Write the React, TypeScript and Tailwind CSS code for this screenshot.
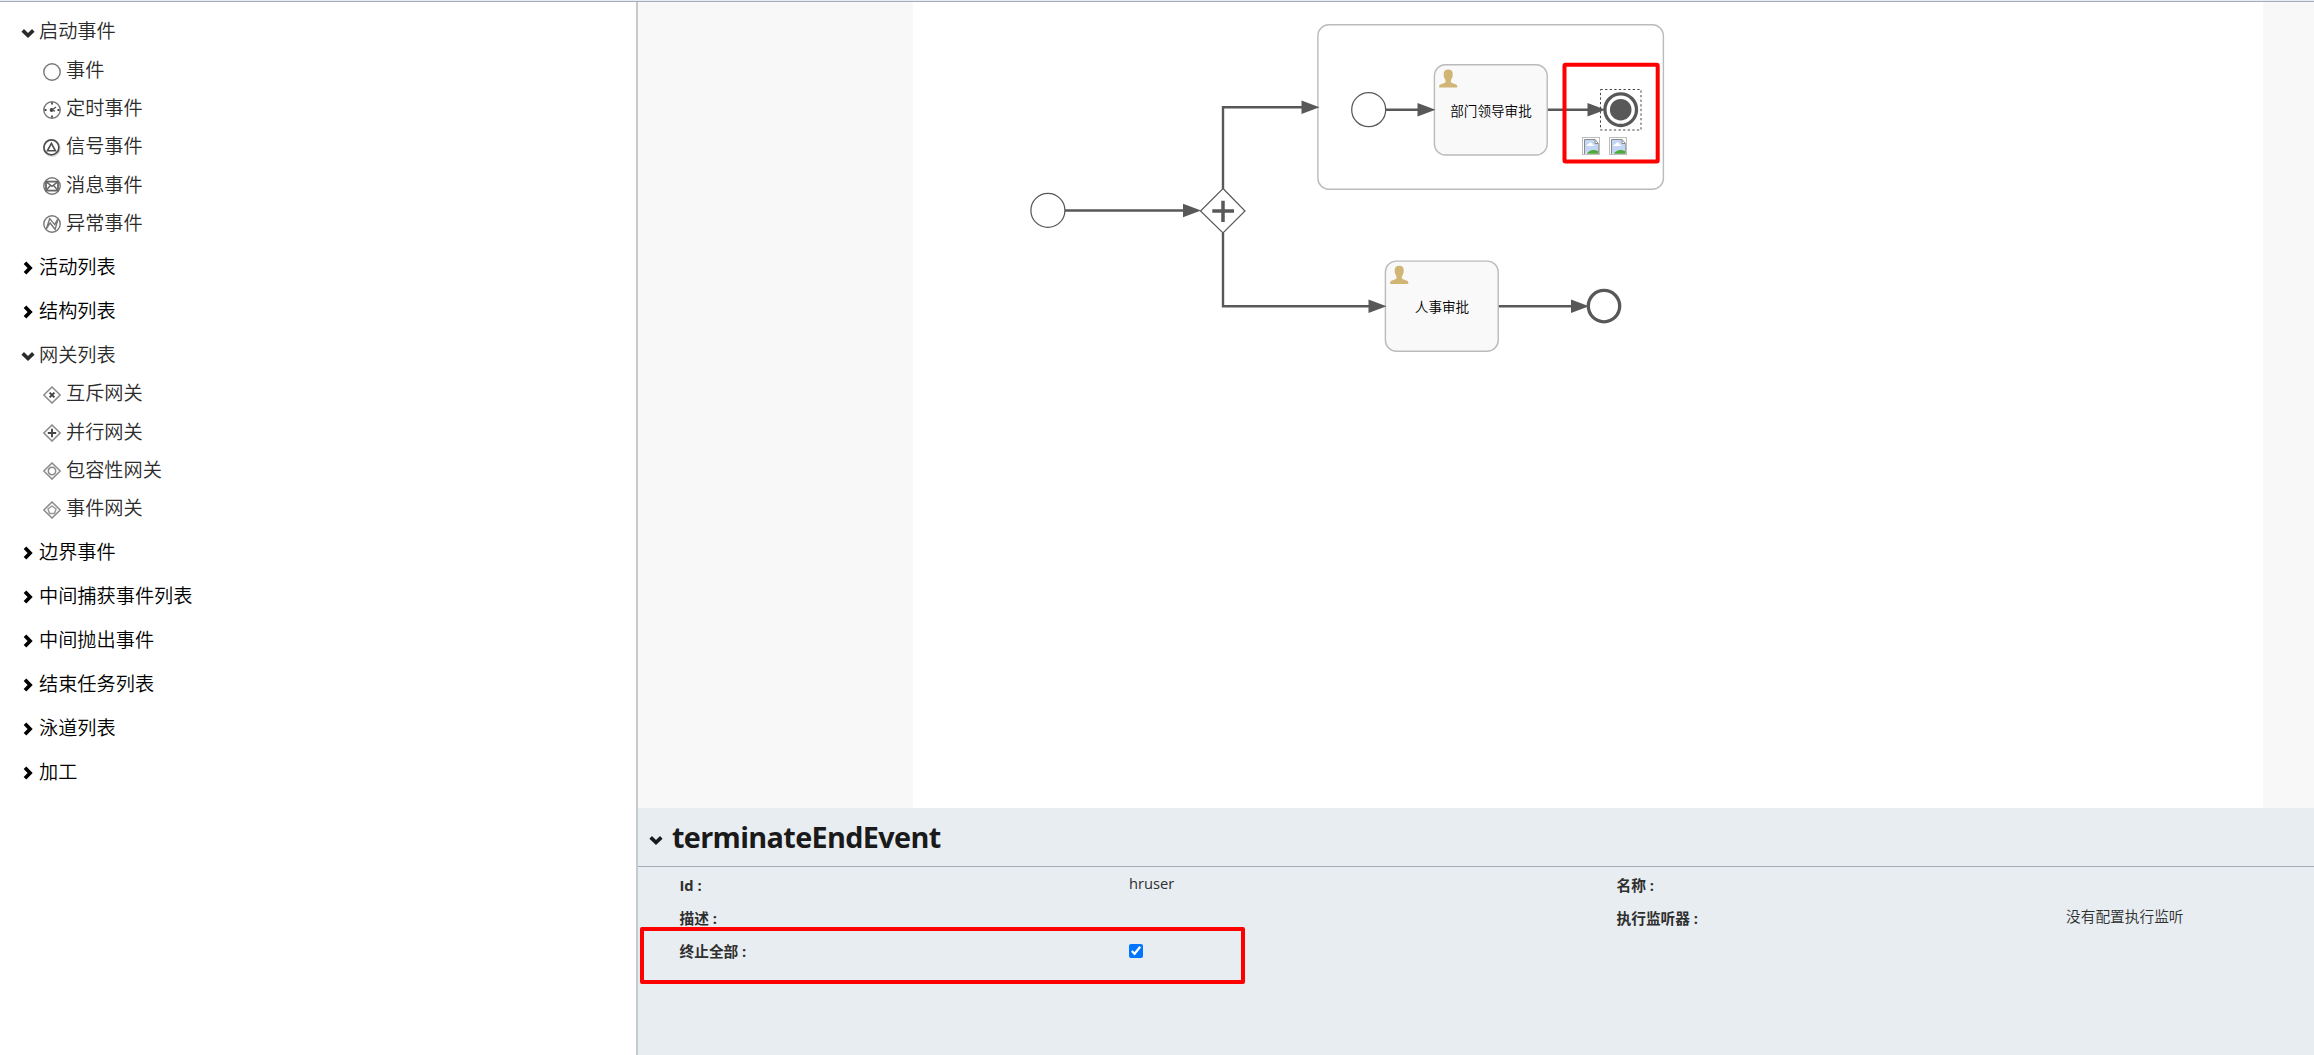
import React from "react";

const FONT = "font-['Open_Sans','Noto_Sans_CJK_SC',sans-serif]";

const GRAY = "#585858";

type Item = { label: string; icon: React.ReactNode };
type Group = { label: string; items?: Item[] };

const ring = <circle cx="9" cy="9" r="8.2" fill="none" stroke="#777" strokeWidth="1.4" />;
const diamond = <path d="M9 1 17.2 9 9 17 .8 9Z" fill="none" stroke="#8c8c8c" strokeWidth="1.6" />;

const groups: Group[] = [
  {
    label: "启动事件",
    items: [
      { label: "事件", icon: ring },
      {
        label: "定时事件",
        icon: (
          <g>
            {ring}
            <path d="M9 1.5v2M9 14.5v2M1.5 9h2M14.5 9h2" stroke="#444" strokeWidth="1.8" />
            <circle cx="8.6" cy="9" r="1.9" fill="#444" />
            <path d="M9 9l4-3M9 9l3 1.2" stroke="#555" strokeWidth="1.3" />
          </g>
        ),
      },
      {
        label: "信号事件",
        icon: (
          <g fill="none" stroke="#4d4d4d">
            <circle cx="9" cy="9.2" r="8.1" stroke="#ddd" strokeWidth="1.4" />
            <circle cx="8.4" cy="8.4" r="7.5" strokeWidth="1.7" />
            <path d="M8.4 4.4 12.4 11.8H4.4Z" strokeWidth="1.6" />
          </g>
        ),
      },
      {
        label: "消息事件",
        icon: (
          <g fill="none" stroke="#666">
            {ring}
            <rect x="3" y="4.6" width="12" height="9" strokeWidth="1.8" />
            <path d="M3 4.6 9 9.4l6-4.8M3 13.6l4.4-5M15 13.6l-4.4-5" strokeWidth="1.5" />
          </g>
        ),
      },
      {
        label: "异常事件",
        icon: (
          <g fill="none" stroke="#777">
            {ring}
            <path d="M3.2 14.2 6.7 3.6l5 6 3.4-6-3 10.8-5-6.4Z" strokeWidth="1.4" />
          </g>
        ),
      },
    ],
  },
  { label: "活动列表" },
  { label: "结构列表" },
  {
    label: "网关列表",
    items: [
      {
        label: "互斥网关",
        icon: (
          <g>
            {diamond}
            <path d="M6.6 6.6l4.8 4.8M11.4 6.6l-4.8 4.8" stroke="#444" strokeWidth="2" />
          </g>
        ),
      },
      {
        label: "并行网关",
        icon: (
          <g>
            {diamond}
            <path d="M9 4.8v8.4M4.8 9h8.4" stroke="#444" strokeWidth="1.9" />
          </g>
        ),
      },
      {
        label: "包容性网关",
        icon: (
          <g>
            {diamond}
            <circle cx="9" cy="9" r="3.7" fill="none" stroke="#8a8a8a" strokeWidth="1.5" />
          </g>
        ),
      },
      {
        label: "事件网关",
        icon: (
          <g>
            {diamond}
            <path d="M9 5 13 8l-1.5 4.6h-5L5 8Z" fill="none" stroke="#9a9a9a" strokeWidth="1.5" />
          </g>
        ),
      },
    ],
  },
  { label: "边界事件" },
  { label: "中间捕获事件列表" },
  { label: "中间抛出事件" },
  { label: "结束任务列表" },
  { label: "泳道列表" },
  { label: "加工" },
];

function Chevron({ open, className }: { open: boolean; className: string }) {
  return (
    <svg viewBox="0 0 14 14" className={className} fill="none" stroke="currentColor" strokeWidth="3.7">
      {open ? <path d="M1.7 4.4 7 9.5l5.3-5.1" /> : <path d="M4 1.7 9.1 7 4 12.3" />}
    </svg>
  );
}

function Palette() {
  return (
    <nav className="w-[636px] shrink-0 pt-[7px] text-[19.2px] leading-none font-[350]">
      {groups.map((g) => (
        <section key={g.label} className={g.items ? "pb-[3px] text-[#2b2b2b]" : "text-black"}>
          <div className="flex h-11 items-center pl-[21px]">
            <Chevron open={!!g.items} className="mt-[3px] mr-1 size-[14px]" />
            <span>{g.label}</span>
          </div>
          {g.items && (
            <ul className="-mt-[2.5px]">
              {g.items.map((it) => (
                <li key={it.label} className="flex h-[38.2px] items-center pl-[43px]">
                  <svg viewBox="0 0 18 18" className="mt-[4px] mr-[5px] size-[18px]">
                    {it.icon}
                  </svg>
                  <span>{it.label}</span>
                </li>
              ))}
            </ul>
          )}
        </section>
      ))}
    </nav>
  );
}

function Arrow({ x, y }: { x: number; y: number }) {
  return <path d={`M${x} ${y}l-18-6.7v13.4Z`} fill={GRAY} />;
}

function Task({ x, y, label }: { x: number; y: number; label: string }) {
  return (
    <g transform={`translate(${x} ${y})`}>
      <rect width="112.8" height="90.2" rx="11" fill="#f9f9f9" stroke="#bbb" strokeWidth="1.4" />
      <path
        d="M9.3 9.5C9 6.3 10.8 4.7 13.8 4.7s4.8 1.6 4.5 4.8c.2 2-.6 4.3-1.8 5.7v2.2c1.6 1.5 6.1 1.9 6.3 3.6v1.8h-18V21c.2-1.7 4.7-2.1 6.3-3.6v-2.2c-1.2-1.4-2-3.7-1.8-5.7Z"
        fill="#d1b575"
      />
      <text x="56.6" y="51.2" textAnchor="middle" fontSize="13.6" className="font-[350]" fill="#000">
        {label}
      </text>
    </g>
  );
}

function PictureIcon({ x, y }: { x: number; y: number }) {
  return (
    <g transform={`translate(${x} ${y})`}>
      <rect x=".5" y=".5" width="17" height="17" fill="#fff" stroke="#bdbdbd" />
      <path d="M2.5 2.5h10l4 4v10h-14Z" fill="#c3d6f5" />
      <path d="M2.5 17V2.5h10.5" fill="none" stroke="#8a8a8a" />
      <path d="M13 2.5v4h3.5Z" fill="#fff" stroke="#8a8a8a" />
      <path d="M16.5 6.5V17" stroke="#a5a5a5" />
      <path d="M4.5 9c0-1.5 1.2-2 2-1.7C7 5 10 5 10.500 7.500c1.500 0 2 .8 1.700 1.500Z" fill="#fff" />
      <path d="M5 16.8c1-3 7-4.8 9.500-3.300l1.500.5v2.800Z" fill="#4ea83a" />
    </g>
  );
}

function Diagram() {
  return (
    <svg viewBox="913 2 1350 806" className="h-[806px] w-[1350px] bg-white">
      <g fill="none" stroke={GRAY} strokeWidth="2.4">
        <path d="M1065 210.5H1186M1223 189V107.2H1303M1223 233V306.3H1370" />
      </g>
      <rect x="1317.9" y="24.8" width="345.5" height="164.5" rx="11" fill="none" stroke="#bbb" strokeWidth="1.4" />
      <Arrow x={1201} y={210.5} />
      <Arrow x={1319.5} y={107.2} />
      <path d="M1223 188.5 1245 211 1223 233 1200.5 211Z" fill="#fff" stroke={GRAY} strokeWidth="1.2" />
      <path d="M1212.3 211h21.7M1223 200.7v21.3" stroke={GRAY} strokeWidth="3.5" />
      <circle cx="1047.9" cy="210.4" r="17" fill="#fff" stroke={GRAY} strokeWidth="1.25" />
      <circle cx="1368.7" cy="109.7" r="17" fill="#fff" stroke={GRAY} strokeWidth="1.25" />
      <path d="M1386 109.7h34M1547 109.7h44M1498 306.3h76" stroke={GRAY} strokeWidth="2.4" />
      <Task x={1434.4} y={64.8} label="部门领导审批" />
      <Task x={1385.4} y={261.1} label="人事审批" />
      <Arrow x={1435.5} y={109.7} />
      <Arrow x={1386.5} y={306.3} />
      <circle cx="1620.7" cy="109.7" r="15.8" fill="#fff" stroke={GRAY} strokeWidth="3.3" />
      <circle cx="1620.7" cy="109.7" r="10.8" fill={GRAY} />
      <Arrow x={1605.5} y={109.7} />
      <circle cx="1604" cy="306.1" r="15.7" fill="#fff" stroke={GRAY} strokeWidth="3.3" />
      <Arrow x={1589} y={306.3} />
      <rect x="1600.5" y="89.5" width="40.5" height="40.5" fill="none" stroke="#444" strokeDasharray="2.3 2.3" />
      <PictureIcon x={1582} y={137} />
      <PictureIcon x={1609} y={137} />
      <rect x="1564.5" y="64.8" width="93.2" height="96.7" rx="1" fill="none" stroke="#f00" strokeWidth="4" />
    </svg>
  );
}

function Cell({ label, value }: { label: string; value?: React.ReactNode }) {
  return (
    <div className="flex h-[33px]">
      <div className="w-[449.5px] pt-[8px] text-[14.7px] leading-5 font-bold">{label} :</div>
      <div className="pt-[6px] text-[14.7px] leading-5">{value}</div>
    </div>
  );
}

function Properties() {
  return (
    <div className="relative h-[247px] bg-[#e8edf1] text-[#2f2f2f]">
      <div className="flex h-[59px] items-center border-b border-[#a4acb9] pl-[11px] text-[#1a1a1a]">
        <Chevron open className="mt-[5px] mr-[9px] size-[14px]" />
        <h2 className="text-[28.8px] leading-none font-bold tracking-[-0.66px]">terminateEndEvent</h2>
      </div>
      <div className="flex pl-[41.5px]">
        <div className="w-[937px]">
          <Cell label="Id" value="hruser" />
          <Cell label="描述" />
          <Cell
            label="终止全部"
            value={<input type="checkbox" defaultChecked className="mt-[5px] block size-[14px] accent-[#0075ff]" />}
          />
        </div>
        <div>
          <Cell label="名称" />
          <Cell label="执行监听器" value={<span className="font-[350]">没有配置执行监听</span>} />
        </div>
      </div>
      <div className="absolute top-[119px] left-[2px] h-[57px] w-[605px] rounded-[2px] border-4 border-[#f00]" />
    </div>
  );
}

export default function App() {
  return (
    <div className={`h-[1055px] w-[2314px] overflow-hidden bg-white ${FONT}`}>
      <div className="h-[2px] border-b border-[#a4acb9] bg-[#e8edf1]" />
      <div className="flex h-[1053px]">
        <Palette />
        <main className="flex-1 border-l-2 border-[#c5cacd]">
          <div className="h-[806px] bg-[#f8f8f8] pl-[275px]">
            <Diagram />
          </div>
          <Properties />
        </main>
      </div>
    </div>
  );
}
